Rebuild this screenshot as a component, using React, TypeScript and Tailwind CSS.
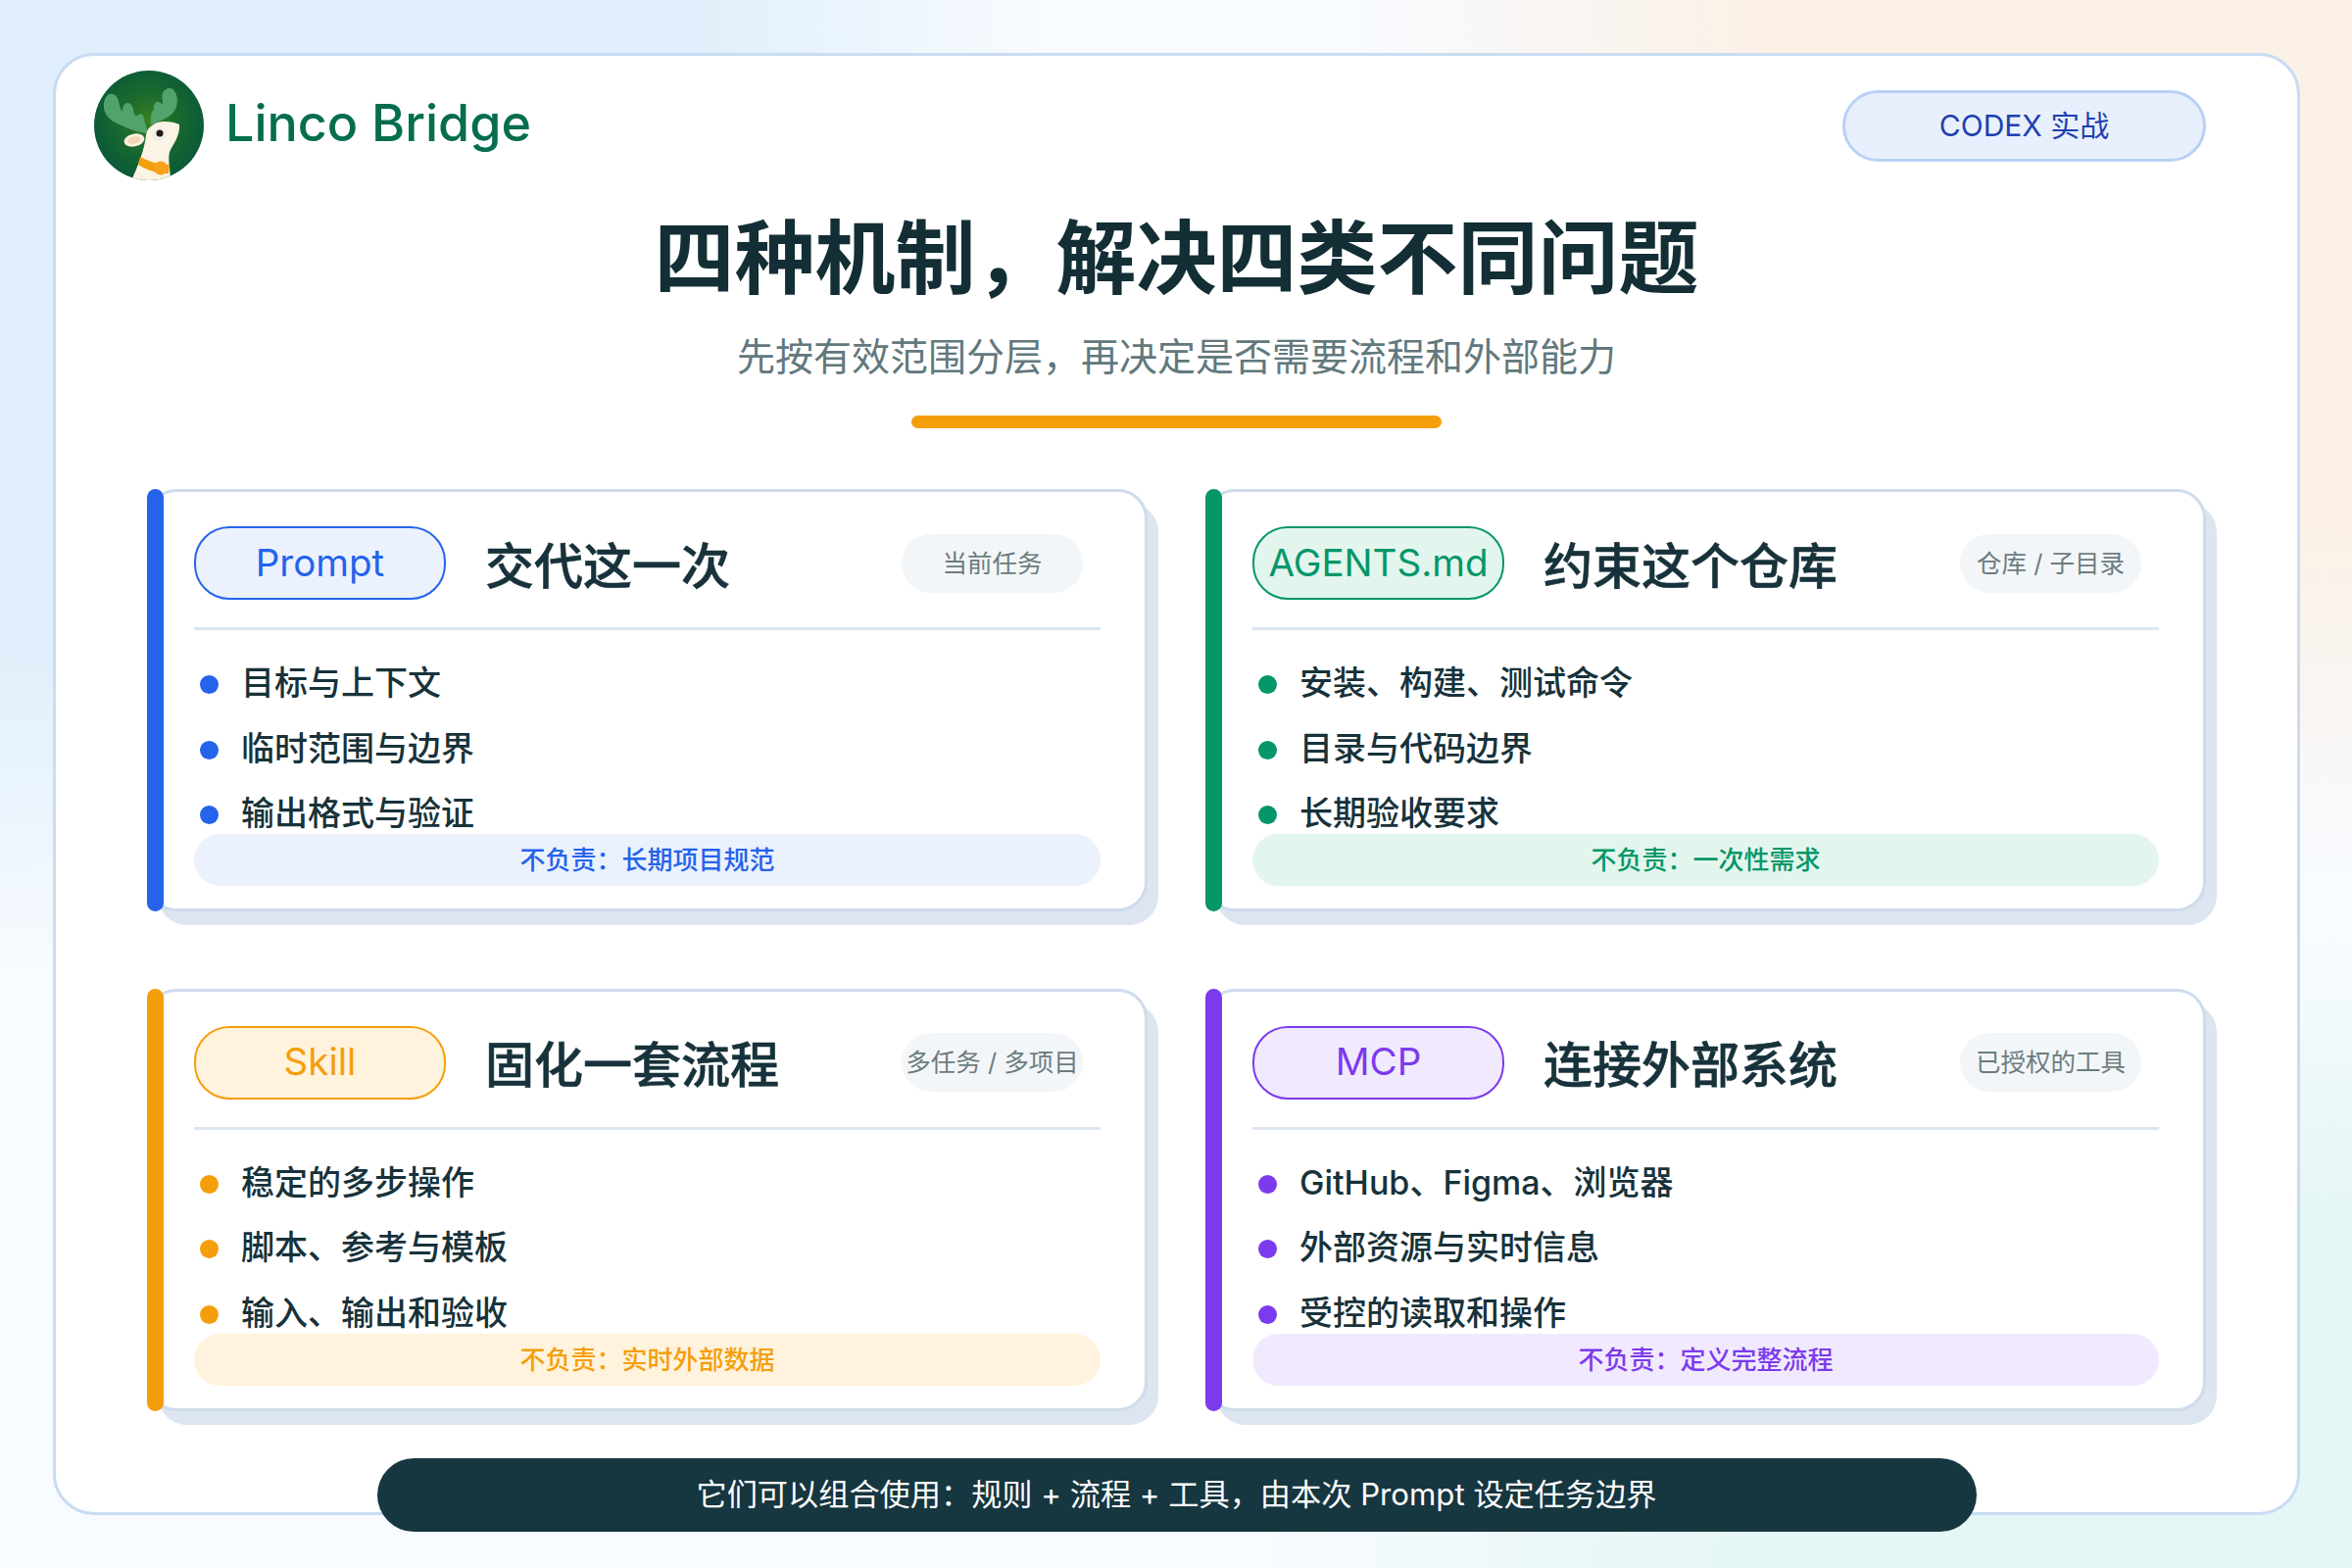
const CARDS = [
  {
    name: "Prompt",
    title: "交代这一次",
    tag: "当前任务",
    items: ["目标与上下文", "临时范围与边界", "输出格式与验证"],
    note: "不负责：长期项目规范",
    bar: "bg-[#2563eb]",
    pill: "bg-[#ebf2fe] border-[#2563eb] text-[#2563eb]",
    soft: "bg-[#ebf2fe] text-[#2563eb]",
  },
  {
    name: "AGENTS.md",
    title: "约束这个仓库",
    tag: "仓库 / 子目录",
    items: ["安装、构建、测试命令", "目录与代码边界", "长期验收要求"],
    note: "不负责：一次性需求",
    bar: "bg-[#059669]",
    pill: "bg-[#e3f6ee] border-[#059669] text-[#059669]",
    soft: "bg-[#e3f6ee] text-[#059669]",
  },
  {
    name: "Skill",
    title: "固化一套流程",
    tag: "多任务 / 多项目",
    items: ["稳定的多步操作", "脚本、参考与模板", "输入、输出和验收"],
    note: "不负责：实时外部数据",
    bar: "bg-[#f59e0b]",
    pill: "bg-[#fff3dd] border-[#f59e0b] text-[#f59e0b]",
    soft: "bg-[#fff3dd] text-[#f59e0b]",
  },
  {
    name: "MCP",
    title: "连接外部系统",
    tag: "已授权的工具",
    items: ["GitHub、Figma、浏览器", "外部资源与实时信息", "受控的读取和操作"],
    note: "不负责：定义完整流程",
    bar: "bg-[#7c3aed]",
    pill: "bg-[#f1eafe] border-[#7c3aed] text-[#7c3aed]",
    soft: "bg-[#f1eafe] text-[#7c3aed]",
  },
];

function Logo() {
  return (
    <svg viewBox="0 0 112 112" className="h-[112px] w-[112px] shrink-0">
      <defs>
        <radialGradient id="logoBg" cx="50%" cy="46%" r="52%">
          <stop offset="0%" stopColor="#39801f" />
          <stop offset="45%" stopColor="#1c6b2e" />
          <stop offset="100%" stopColor="#0a5a38" />
        </radialGradient>
        <clipPath id="logoClip">
          <circle cx="56" cy="56" r="56" />
        </clipPath>
      </defs>
      <g clipPath="url(#logoClip)">
        <rect width="112" height="112" fill="url(#logoBg)" />
        <g fill="#52a26b" stroke="#52a26b" strokeWidth="2" strokeLinejoin="round">
          <path d="M54 63 C46 62 34 58 24 53 C15 49 10 42 11 33 C12 27 15 24 19 25 C23 26 24 30 25 36 C26 41 29 44 30 42 C30 38 31 34 34 34 C38 34 39 39 40 44 C41 48 44 48 46 46 C48 44 50 47 50 50 C51 55 53 59 54 63 Z" />
          <path d="M59 54 C58 48 59 43 62 40 C61 36 63 32 66 33 C69 34 70 37 71 36 C72 33 69 27 71 23 C73 19 77 18 80 20 C84 24 85 31 83 37 C81 43 75 47 70 49 C66 51 62 53 59 54 Z" />
        </g>
        <path
          d="M87 55 C81 52 71 51 65 53 C59 55 54 59 53 66 C52 75 49 88 39 110 L39 112 L78 112 C78 102 75 92 77 83 C80 76 88 67 87 55 Z"
          fill="#fbf3e3"
        />
        <ellipse cx="41" cy="71" rx="10.5" ry="6.5" transform="rotate(-12 41 71)" fill="#fbf0dc" />
        <ellipse cx="41" cy="71" rx="6.5" ry="3.5" transform="rotate(-12 41 71)" fill="#f3d6b5" />
        <circle cx="66" cy="65" r="7" fill="#efeee9" />
        <circle cx="67" cy="64" r="3.5" fill="#1f1a17" />
        <path d="M47 88 C56 93 66 96 77 96 L76 105 C65 105 54 102 45 96 Z" fill="#f59e0b" />
        <circle cx="68" cy="99.5" r="7" fill="#f8a21b" />
      </g>
    </svg>
  );
}

function Card({ card }: { card: (typeof CARDS)[number] }) {
  return (
    <div className="relative h-[431px] rounded-[30px] border-[3px] border-[#cfdcec] bg-white pl-[45px] pr-[45px] pt-[35px] shadow-[11px_14px_0_#dce5f0]">
      <div className={`absolute -left-[3px] -top-[3px] -bottom-[3px] w-[17px] rounded-full ${card.bar}`} />
      <div className="flex items-center">
        <div className={`flex h-[75px] w-[257px] shrink-0 items-center justify-center rounded-[36px] border-[2px] text-[38.5px] whitespace-nowrap ${card.pill}`}>
          {card.name}
        </div>
        <h2 className="ml-[40px] pt-[6px] text-[50px] leading-[60px] font-medium text-[#17323a] [-webkit-text-stroke:0.6px]">{card.title}</h2>
        <div className="ml-auto mr-[18px] flex h-[60px] w-[185px] shrink-0 items-center justify-center rounded-full bg-[#f3f6f9] pt-[1px] text-[25.5px] text-[#6c7c80] whitespace-nowrap">
          {card.tag}
        </div>
      </div>
      <div className="mt-[28px] h-[3px] bg-[#dce5f0]" />
      <ul className="mt-[32px] flex flex-col gap-[22.5px]">
        {card.items.map((item) => (
          <li key={item} className="flex items-center pl-[6px] text-[34px] leading-[44px] font-medium text-[#17323a]">
            <span className={`mr-[23px] mt-[3px] h-[19px] w-[19px] shrink-0 rounded-full ${card.bar}`} />
            {item}
          </li>
        ))}
      </ul>
      <div className={`-mt-[1px] flex h-[53px] items-center justify-center rounded-full text-[26px] font-medium ${card.soft}`}>
        {card.note}
      </div>
    </div>
  );
}

export default function App() {
  return (
    <div className="h-[1600px] w-[2400px] overflow-hidden bg-[#f8fbff] bg-[radial-gradient(ellipse_1070px_1000px_at_0_0,#e0effb_66%,transparent_100%),radial-gradient(ellipse_1020px_900px_at_100%_0,#fbf1e7_60%,transparent_100%),radial-gradient(ellipse_1115px_650px_at_100%_100%,#e4f6f5_55%,transparent_100%)] pl-[54px] pr-[53px] pt-[54px] [font-family:Inter,'Noto_Sans_CJK_SC',sans-serif]">
      <div className="flex h-[1492px] flex-col rounded-[42px] border-[3px] border-[#c9dcf2] bg-white">
        <header className="mt-[15px] flex h-[112px] items-start justify-between pl-[39px] pr-[93px]">
          <div className="flex items-center gap-[22px]">
            <Logo />
            <span className="mb-[4px] text-[52px] font-medium text-[#066d4f]">Linco Bridge</span>
          </div>
          <div className="mt-[20px] flex h-[73px] w-[371px] items-center justify-center rounded-full border-[3px] border-[#b9d0f6] bg-[#e8f0fe] text-[30px] text-[#1e40af]">
            CODEX 实战
          </div>
        </header>
        <h1 className="mt-[31px] text-center text-[82px] leading-[97px] font-bold text-[#132e35]">
          四种机制，解决四类不同问题
        </h1>
        <p className="mt-[27.5px] text-center text-[39px] leading-[48px] text-[#62787d]">
          先按有效范围分层，再决定是否需要流程和外部能力
        </p>
        <div className="mx-auto mt-[36.5px] h-[13px] w-[541px] rounded-full bg-[#f59e0b]" />
        <div className="mt-[62px] ml-[93px] grid w-[2101px] grid-cols-2 gap-x-[59px] gap-y-[78.5px]">
          {CARDS.map((card) => (
            <Card key={card.name} card={card} />
          ))}
        </div>
        <div className="mx-auto mt-auto -mb-[20px] flex h-[75px] w-[1632px] items-center justify-center rounded-full bg-[#163640] text-[31.2px] text-white">
          它们可以组合使用：规则 + 流程 + 工具，由本次 Prompt 设定任务边界
        </div>
      </div>
    </div>
  );
}
